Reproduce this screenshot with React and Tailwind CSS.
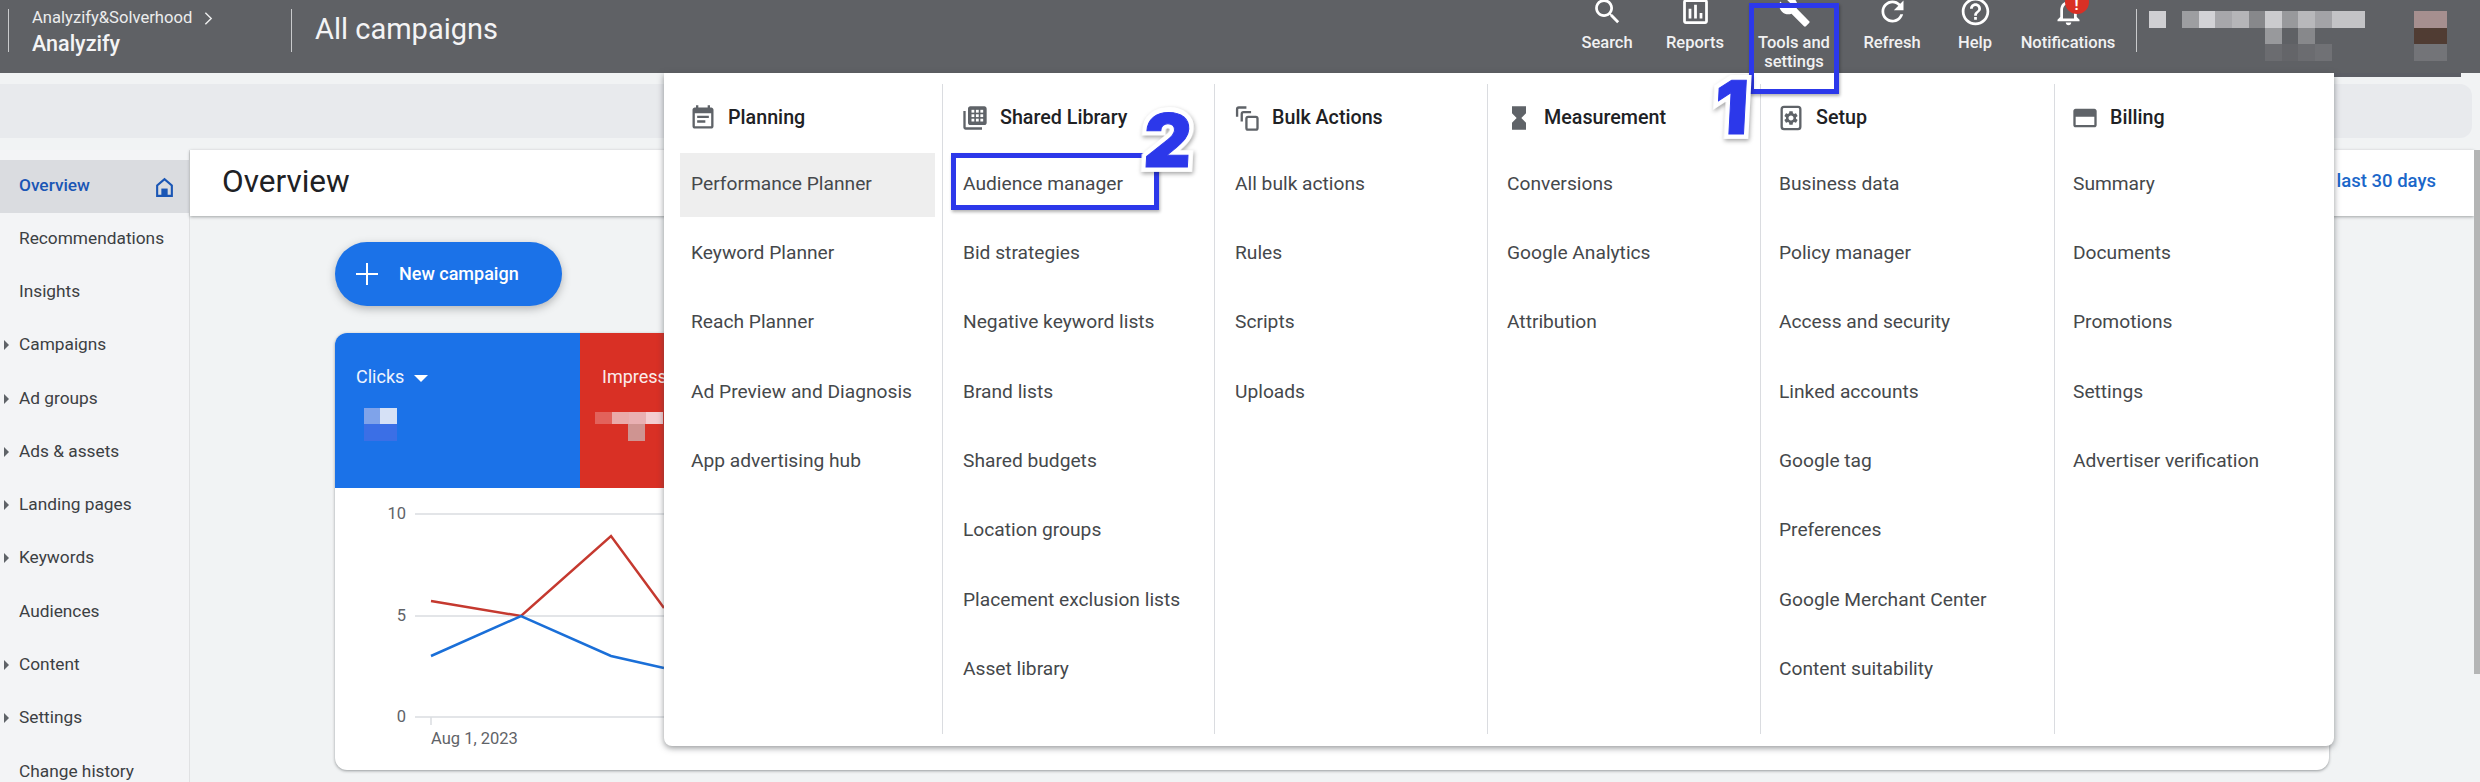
import React from "react";

const P = {
  search: "M15.5 14h-.79l-.28-.27C15.41 12.59 16 11.11 16 9.5 16 5.91 13.09 3 9.5 3S3 5.91 3 9.5 5.91 16 9.5 16c1.61 0 3.09-.59 4.23-1.57l.27.28v.79l5 4.99L20.49 19l-4.99-5zm-6 0C7.01 14 5 11.99 5 9.5S7.01 5 9.5 5 14 7.01 14 9.5 11.99 14 9.5 14z",
  reports: "M19 3H5c-1.1 0-2 .9-2 2v14c0 1.1.9 2 2 2h14c1.1 0 2-.9 2-2V5c0-1.1-.9-2-2-2zm0 16H5V5h14v14zM7 10h2v7H7zm4-3h2v10h-2zm4 6h2v4h-2z",
  tools: "M22.7 19l-9.1-9.1c.9-2.3.4-5-1.5-6.9-2-2-5-2.4-7.4-1.3L9 6 6 9 1.6 4.7C.4 7.1.9 10.1 2.9 12.1c1.9 1.9 4.6 2.4 6.9 1.5l9.1 9.1c.4.4 1 .4 1.4 0l2.3-2.3c.5-.4.5-1.1.1-1.4z",
  refresh: "M17.65 6.35C16.2 4.9 14.21 4 12 4c-4.42 0-7.99 3.58-7.99 8s3.57 8 7.99 8c3.73 0 6.84-2.55 7.73-6h-2.08c-.82 2.33-3.04 4-5.65 4-3.31 0-6-2.69-6-6s2.69-6 6-6c1.66 0 3.14.69 4.22 1.78L13 11h7V4l-2.35 2.35z",
  help: "M11 18h2v-2h-2v2zm1-16C6.48 2 2 6.48 2 12s4.48 10 10 10 10-4.48 10-10S17.52 2 12 2zm0 18c-4.41 0-8-3.59-8-8s3.59-8 8-8 8 3.59 8 8-3.59 8-8 8zm0-14c-2.21 0-4 1.79-4 4h2c0-1.1.9-2 2-2s2 .9 2 2c0 2-3 1.75-3 5h2c0-2.25 3-2.5 3-5 0-2.21-1.79-4-4-4z",
  bell: "M12 22c1.1 0 2-.9 2-2h-4c0 1.1.89 2 2 2zm6-6v-5c0-3.07-1.64-5.64-4.5-6.32V4c0-.83-.67-1.5-1.5-1.5s-1.5.67-1.5 1.5v.68C7.63 5.36 6 7.92 6 11v5l-2 2v1h16v-1l-2-2zm-2 1H8v-6c0-2.48 1.51-4.5 4-4.5s4 2.02 4 4.5v6z",
  note: "M17 10H7v2h10v-2zm2-7h-1V1h-2v2H8V1H6v2H5c-1.11 0-1.99.9-1.99 2L3 19c0 1.1.89 2 2 2h14c1.1 0 2-.9 2-2V5c0-1.1-.9-2-2-2zm0 16H5V8h14v11zm-5-5H7v2h7v-2z",
  hourglass: "M6 2v6h.01L6 8.01 10 12l-4 4 .01.01H6V22h12v-5.99h-.01L18 16l-4-4 4-3.99-.01-.01H18V2H6z",
  gear: "M19.14 12.94c.04-.3.06-.61.06-.94 0-.32-.02-.64-.07-.94l2.03-1.58c.18-.14.23-.41.12-.61l-1.92-3.32c-.12-.22-.37-.29-.59-.22l-2.39.96c-.5-.38-1.03-.7-1.62-.94l-.36-2.54c-.04-.24-.24-.41-.48-.41h-3.84c-.24 0-.43.17-.47.41l-.36 2.54c-.59.24-1.13.57-1.62.94l-2.39-.96c-.22-.08-.47 0-.59.22L2.74 8.87c-.12.21-.08.47.12.61l2.03 1.58c-.05.3-.09.63-.09.94s.02.64.07.94l-2.03 1.58c-.18.14-.23.41-.12.61l1.92 3.32c.12.22.37.29.59.22l2.39-.96c.5.38 1.03.7 1.62.94l.36 2.54c.05.24.24.41.48.41h3.84c.24 0 .44-.17.47-.41l.36-2.54c.59-.24 1.13-.56 1.62-.94l2.39.96c.22.08.47 0 .59-.22l1.92-3.32c.12-.22.07-.47-.12-.61l-2.01-1.58zM12 15.6c-1.98 0-3.6-1.62-3.6-3.6s1.62-3.6 3.6-3.6 3.6 1.62 3.6 3.6-1.62 3.6-3.6 3.6z",
  billing: "M20 4H4c-1.11 0-1.99.89-1.99 2L2 18c0 1.11.89 2 2 2h16c1.11 0 2-.89 2-2V6c0-1.11-.89-2-2-2zm0 14H4v-7h16v7z",
  libraryBase: "M4 6H2v14c0 1.1.9 2 2 2h14v-2H4V6zm16-4H8c-1.1 0-2 .9-2 2v12c0 1.1.9 2 2 2h12c1.1 0 2-.9 2-2V4c0-1.1-.9-2-2-2z",
};

const Glyph = ({ d, className }) => (
  <svg viewBox="0 0 24 24" className={className} fill="currentColor"><path d={d} /></svg>
);

const LibraryIcon = ({ className }) => (
  <svg viewBox="0 0 24 24" className={className} fill="currentColor">
    <path d={P.libraryBase} />
    <g fill="#ffffff">
      <rect x="9" y="5" width="2.4" height="2.4" /><rect x="12.8" y="5" width="2.4" height="2.4" /><rect x="16.6" y="5" width="2.4" height="2.4" />
      <rect x="9" y="8.8" width="2.4" height="2.4" /><rect x="12.8" y="8.8" width="2.4" height="2.4" /><rect x="16.6" y="8.8" width="2.4" height="2.4" />
      <rect x="9" y="12.6" width="2.4" height="2.4" /><rect x="12.8" y="12.6" width="2.4" height="2.4" /><rect x="16.6" y="12.6" width="2.4" height="2.4" />
    </g>
  </svg>
);

const StackIcon = ({ className }) => (
  <svg viewBox="0 0 24 24" className={className} fill="none" stroke="currentColor" strokeWidth="2">
    <path d="M3.5 11V4.5a1.5 1.5 0 0 1 1.5-1.5h6.5" />
    <path d="M7.5 15V8.5A1.5 1.5 0 0 1 9 7h6.5" />
    <rect x="11.5" y="11" width="9.5" height="11" rx="1.5" />
  </svg>
);

const SetupIcon = ({ className }) => (
  <svg viewBox="0 0 24 24" className={className}>
    <rect x="4" y="2.5" width="16" height="19" rx="2" fill="none" stroke="currentColor" strokeWidth="2" />
    <path d={P.gear} fill="currentColor" transform="translate(12 12) scale(0.6) translate(-12 -12)" />
  </svg>
);

const topItems = [
  { d: P.search, label: ["Search"], w: "w-[88px]" },
  { d: P.reports, label: ["Reports"], w: "w-[88px]" },
  { d: P.tools, label: ["Tools and", "settings"], w: "w-[110px]" },
  { d: P.refresh, label: ["Refresh"], w: "w-[86px]" },
  { d: P.help, label: ["Help"], w: "w-[80px]" },
  { d: P.bell, label: ["Notifications"], w: "w-[106px]", badge: true },
];

const row1 = ["bg-[#cfcfd2]", "bg-transparent", "bg-[#9d9ea1]", "bg-[#d2d2d6]", "bg-[#a7a7ab]", "bg-[#b5b5b8]", "bg-[#87888b]", "bg-[#cbcbce]", "bg-[#98999c]", "bg-[#b8b8bb]", "bg-[#a3a3a7]", "bg-[#c3c3c6]", "bg-[#c3c3c6]"];
const row2 = ["bg-transparent", "bg-transparent", "bg-transparent", "bg-transparent", "bg-transparent", "bg-transparent", "bg-transparent", "bg-[#98999c]", "bg-transparent", "bg-[#87888b]"];
const row3 = ["bg-transparent", "bg-transparent", "bg-transparent", "bg-transparent", "bg-transparent", "bg-transparent", "bg-transparent", "bg-[#6b6c70]", "bg-[#646569]", "bg-[#6b6c70]", "bg-[#707175]"];

const side = [
  ["Recommendations", false],
  ["Insights", false],
  ["Campaigns", true],
  ["Ad groups", true],
  ["Ads & assets", true],
  ["Landing pages", true],
  ["Keywords", true],
  ["Audiences", false],
  ["Content", true],
  ["Settings", true],
  ["Change history", false],
];

const columns = [
  { title: "Planning", icon: <Glyph d={P.note} className="w-7 h-7 text-[#5f6368]" />, w: "w-[279px]", pl: "pl-[27px]", items: ["Performance Planner", "Keyword Planner", "Reach Planner", "Ad Preview and Diagnosis", "App advertising hub"] },
  { title: "Shared Library", icon: <LibraryIcon className="w-7 h-7 text-[#5f6368]" />, w: "w-[272px]", pl: "pl-[20px]", items: ["Audience manager", "Bid strategies", "Negative keyword lists", "Brand lists", "Shared budgets", "Location groups", "Placement exclusion lists", "Asset library"] },
  { title: "Bulk Actions", icon: <StackIcon className="w-7 h-7 text-[#5f6368]" />, w: "w-[273px]", pl: "pl-[20px]", items: ["All bulk actions", "Rules", "Scripts", "Uploads"] },
  { title: "Measurement", icon: <Glyph d={P.hourglass} className="w-7 h-7 text-[#5f6368]" />, w: "w-[273px]", pl: "pl-[19px]", items: ["Conversions", "Google Analytics", "Attribution"] },
  { title: "Setup", icon: <SetupIcon className="w-7 h-7 text-[#5f6368]" />, w: "w-[294px]", pl: "pl-[18px]", items: ["Business data", "Policy manager", "Access and security", "Linked accounts", "Google tag", "Preferences", "Google Merchant Center", "Content suitability"] },
  { title: "Billing", icon: <Glyph d={P.billing} className="w-7 h-7 text-[#5f6368]" />, w: "w-[279px]", pl: "pl-[18px]", items: ["Summary", "Documents", "Promotions", "Settings", "Advertiser verification"], last: true },
];

const Chart = () => (
  <svg width="330" height="282" viewBox="0 0 330 282" className="block">
    <g stroke="#dadce0" strokeWidth="1.5">
      <line x1="80" y1="26" x2="330" y2="26" />
      <line x1="80" y1="128" x2="330" y2="128" />
      <line x1="80" y1="229" x2="330" y2="229" />
      <line x1="96" y1="229" x2="96" y2="237" />
    </g>
    <polyline points="96,113 186,128 276,48 329,120" fill="none" stroke="#c5392f" strokeWidth="2.5" />
    <polyline points="96,168 186,128 276,168 329,180" fill="none" stroke="#1a6fd8" strokeWidth="2.5" />
    <g fill="#5f6368" fontSize="16.5" fontFamily="Roboto, sans-serif">
      <text x="71" y="31" textAnchor="end">10</text>
      <text x="71" y="133" textAnchor="end">5</text>
      <text x="71" y="234" textAnchor="end">0</text>
      <text x="96" y="256">Aug 1, 2023</text>
    </g>
  </svg>
);

const Step = ({ n, className }) => (
  <div className={`absolute text-[74px] leading-[80px] font-['Inter',sans-serif] font-black -skew-x-3 ${className}`}>
    <span className="text-white [-webkit-text-stroke:10px_#ffffff] drop-shadow-[1px_2px_2px_rgba(0,0,0,0.35)]">{n}</span>
    <span className="absolute left-0 top-0 text-[#2c38ea] [-webkit-text-stroke:1px_#2c38ea]" aria-hidden="true">{n}</span>
  </div>
);

export default function App() {
  return (
    <div className="relative w-[2480px] h-[782px] overflow-hidden bg-[#f1f3f4] font-['Roboto',sans-serif]">
      {/* top bar */}
      <header className="flex items-start h-[73px] bg-[#5f6165] text-white overflow-hidden">
        <div className="ml-2 mt-[9px] w-px h-[43px] bg-[#c9cacc]" />
        <div className="ml-[23px] mt-[8px] w-[259px]">
          <div className="flex items-center text-[16.6px] leading-[20px] text-[#eceded]">
            <span>Analyzify&amp;Solverhood</span>
            <svg viewBox="0 0 10 16" className="ml-3 w-[9px] h-[15px]" fill="none" stroke="currentColor" strokeWidth="1.6"><path d="M1.5 1.5 8 8l-6.5 6.5" /></svg>
          </div>
          <div className="mt-[4px] text-[21.5px] leading-[24px] font-medium text-[#f4f4f5]">Analyzify</div>
        </div>
        <div className="mt-[9px] w-px h-[43px] bg-[#c9cacc]" />
        <div className="ml-[23px] mt-[11px] text-[29px] leading-[36px] text-[#f4f4f5]">All campaigns</div>

        <nav className="ml-auto flex items-start">
          {topItems.map((it) => (
            <div key={it.label[0]} className={`${it.w} flex flex-col items-center`}>
              <div className="relative -mt-[5px] h-[33px]">
                <Glyph d={it.d} className="w-[33px] h-[33px]" />
                {it.badge && (
                  <div className="absolute left-[13px] -top-[5px] w-6 h-6 rounded-full bg-[#d93025] flex items-center justify-center text-[15px] leading-none font-bold pt-[7px]">!</div>
                )}
              </div>
              <div className="mt-[5px] text-[16.5px] leading-[19px] font-medium text-center whitespace-nowrap text-[#f1f1f2]">
                {it.label.map((l) => (<div key={l}>{l}</div>))}
              </div>
            </div>
          ))}
        </nav>
        <div className="ml-[15px] mt-[9px] w-px h-[43px] bg-[#c9cacc]" />
        <div className="ml-3 mt-[11px] w-[265px] flex flex-col">
          {[row1, row2, row3].map((r, i) => (
            <div key={i} className="flex h-[16.5px]">
              {r.map((c, j) => (<div key={j} className={`w-[16.6px] h-full ${c}`} />))}
            </div>
          ))}
        </div>
        <div className="mr-[33px] mt-[11px] w-[33px] flex flex-col">
          <div className="h-[16.5px] bg-[#a68f8f]" />
          <div className="h-[16.5px] bg-[#503c33]" />
          <div className="h-[16.5px] bg-[#737478]" />
        </div>
      </header>

      {/* search strip */}
      <div className="mt-[11px] w-[2472px] h-[54px] rounded-r-xl bg-[#e8eaed]" />

      {/* main */}
      <div className="mt-3 flex items-start h-[632px]">
        <aside className="w-[190px] h-full shrink-0 pt-[10px] border-r border-[#e0e1e3] bg-[#f3f4f6] text-[17.3px] text-[#3c4043]">
          <div className="flex items-center justify-between h-[53px] bg-[#dadce0] pl-[19px] pr-[15px] pb-[2px] text-[#1a56b5] font-medium">
            <span>Overview</span>
            <svg viewBox="0 0 18 20" className="w-[19px] h-[21px] mt-[3px]" fill="none" stroke="currentColor" strokeWidth="2"><path d="M2 18V8l7-6 7 6v10z" /><rect x="6" y="11" width="6" height="7" fill="currentColor" stroke="none" /></svg>
          </div>
          {side.map(([t, arrow]) => (
            <div key={t} className="relative flex items-center h-[53.3px] pl-[19px] pb-[2px] whitespace-nowrap">
              {arrow && <span className="absolute left-[4px] w-0 h-0 border-y-[5px] border-y-transparent border-l-[5px] border-l-[#5f6368]" />}
              {t}
            </div>
          ))}
        </aside>

        <main className="flex-1 h-full">
          <div className="flex items-center justify-between h-[66px] bg-white shadow-[0_1px_3px_rgba(60,64,67,0.45)] pl-[32px] pr-[38px] pb-[3px]">
            <span className="text-[31.5px] leading-none text-[#202124]">Overview</span>
            <span className="text-[18.5px] text-[#1a67c9] font-medium">Compare last 30 days</span>
          </div>
          <button className="ml-[145px] mt-[26px] flex items-center w-[227px] h-[64px] pb-[2px] rounded-full bg-[#1b72e8] text-white text-[18px] font-medium shadow-[0_3px_8px_rgba(60,64,67,0.35)]">
            <svg viewBox="0 0 22 22" className="ml-[21px] w-[22px] h-[22px] mt-[2px]" stroke="currentColor" strokeWidth="2"><path d="M11 0v22M0 11h22" /></svg>
            <span className="ml-[21px]">New campaign</span>
          </button>
          <section className="ml-[145px] mt-[27px] w-[1994px] h-[437px] bg-white rounded-[12px] shadow-[0_1px_3px_rgba(60,64,67,0.5)] overflow-hidden">
            <div className="flex h-[155px]">
              <div className="w-[245px] bg-[#1b72e8] pl-[21px] pt-[33px] text-white text-[18px]">
                <div className="flex items-center leading-[22px] text-[#eef4fd]">
                  Clicks
                  <span className="ml-[10px] mt-[2px] w-0 h-0 border-x-[7px] border-x-transparent border-t-[7px] border-t-white" />
                </div>
                <div className="mt-[20px] ml-[8px] flex">
                  <div className="w-[16px] h-4 bg-[#7fa3ea]" />
                  <div className="w-[17px] h-4 bg-[#d6e1f6]" />
                </div>
                <div className="ml-[8px] w-[33px] h-[17px] bg-[#3b6fe6]" />
              </div>
              <div className="flex-1 bg-[#d93025] pl-[22px] pt-[33px] text-white text-[18px] leading-[22px]">
                <span className="text-[#fbeceb]">Impressions</span>
                <div className="mt-[24px] -ml-[7px] flex">
                  <div className="w-[17px] h-[12px] bg-[#e2625b]" />
                  <div className="w-[17px] h-[12px] bg-[#eaaaa9]" />
                  <div className="w-[17px] h-[12px] bg-[#e9b0b2]" />
                  <div className="w-[17px] h-[12px] bg-[#f3cdd0]" />
                </div>
                <div className="ml-[26px] w-[17px] h-[17px] bg-[#cf9491]" />
              </div>
            </div>
            <Chart />
          </section>
        </main>

        <div className="w-[6px] h-[524px] bg-[#b4b5b5]" />
      </div>

      {/* strip that hangs under the header by the account name */}
      <div className="absolute left-[2140px] top-[73px] w-[321px] h-[4px] bg-[#5c5e65]" />

      {/* dropdown menu */}
      <div className="absolute left-[664px] top-[73px] w-[1670px] h-[673px] pt-[11px] bg-white rounded-b-[8px] shadow-[0_2px_6px_rgba(60,64,67,0.55)] flex items-start">
        {columns.map((c) => (
          <div key={c.title} className={`${c.w} h-[650px] ${c.pl} ${c.last ? "" : "border-r border-[#dadce0]"}`}>
            <div className="flex items-center h-[66px] pt-[2px] -ml-[2px] gap-[11px] text-[19.7px] font-medium text-[#202124]">
              {c.icon}
              <span>{c.title}</span>
            </div>
            {c.items.map((t) => (
              <div key={t} className="relative flex items-center h-[69.3px] pb-[1px] text-[19.2px] text-[#45484b] whitespace-nowrap">
                {t === "Performance Planner" && <div className="absolute -left-[11px] top-[3px] w-[255px] h-[64px] bg-[#eeeeee]" />}
                <span className="relative">{t}</span>
              </div>
            ))}
          </div>
        ))}
      </div>

      {/* annotations */}
      <div className="absolute left-[1749px] top-[3px] w-[90px] h-[91px] border-[5px] border-[#2c38ea] shadow-[1px_2px_3px_rgba(0,0,0,0.3)]" />
      <div className="absolute left-[951px] top-[153px] w-[208px] h-[57px] border-[5px] border-[#2c38ea] shadow-[1px_2px_3px_rgba(0,0,0,0.3)]" />
      <Step n="1" className="left-[1715px] top-[67px]" />
      <Step n="2" className="left-[1144px] top-[100px]" />
    </div>
  );
}
